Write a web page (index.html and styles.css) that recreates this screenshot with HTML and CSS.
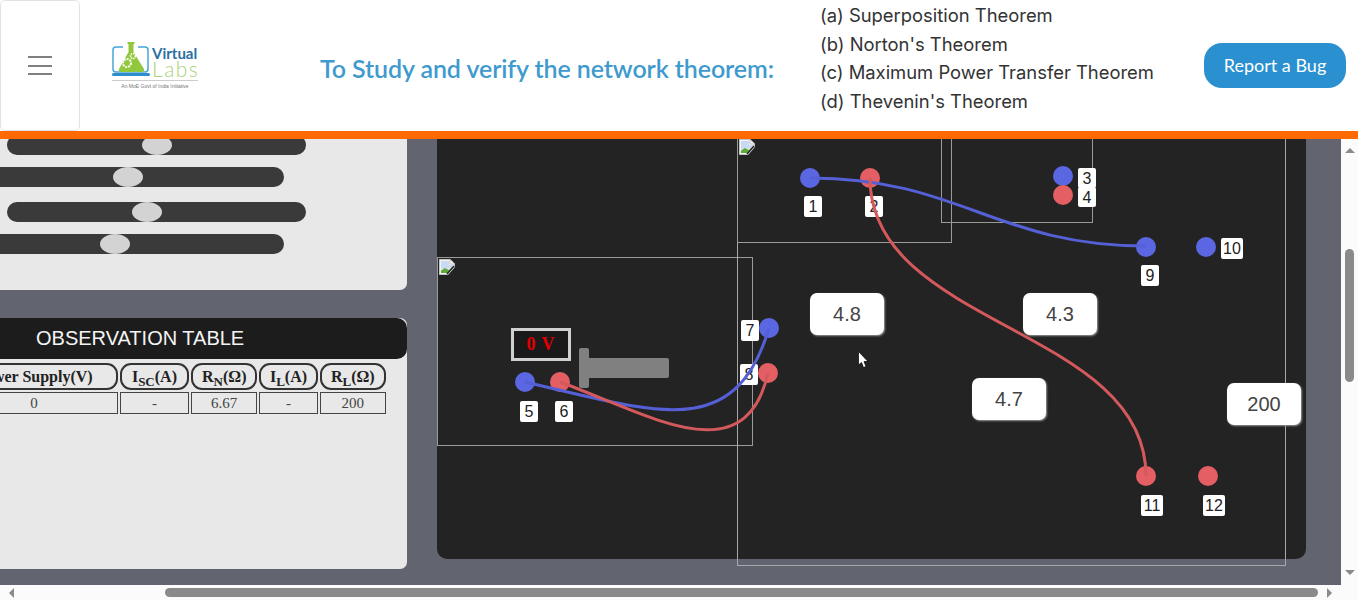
FILE: index.html
```html
<!DOCTYPE html>
<html lang="en">
<head>
    <meta charset="UTF-8">
    <title>Virtual Labs - Network Theorem</title>
    <link rel="stylesheet" href="styles.css">
</head>
<body>
<svg class="defs" width="0" height="0">
    <symbol id="broken" viewBox="0 0 16 16">
        <path d="M.5 .5H11L15.500 5V15.500H.5Z" fill="#f2f2f2" stroke="#c4c4c4"/>
        <path d="M2 2H10V6H14V9L2 10Z" fill="#c9daf5"/>
        <path d="M2 14V11.500L6 9L10 11L13 8L9 14Z" fill="#5fa83e"/>
        <path d="M11 .5V5H15.500Z" fill="#fff" stroke="#c4c4c4"/>
        <path d="M16 8L9 16H16Z" fill="#232323"/>
        <path d="M15 7L8 15" stroke="#232323" stroke-width="1.500"/>
    </symbol>
</svg>

<header class="top">
    <button class="menu-btn" type="button" aria-label="menu">
        <span></span><span></span><span></span>
    </button>

    <div class="logo">
        <div class="logo-main">
            <svg class="logo-icon" width="40" height="36" viewBox="0 0 40 36">
                <path d="M11 5H4Q1 5 1 8V27Q1 30 4 30H33Q36 30 36 27V8Q36 5 33 5H26" fill="none" stroke="#45a5da" stroke-width="1.500"/>
                <rect x="0" y="31" width="38" height="3" rx="1.500" fill="#2c8fcb"/>
                <path d="M15.500 0H22.500V2H21.500V10L32 27Q33 30 30 30H9Q6 30 7 27L16.500 10V2H15.500Z" fill="#92c83e"/>
                <circle cx="15" cy="21" r="4" fill="none" stroke="#fff" stroke-width="2" stroke-dasharray="2 1"/>
                <circle cx="21" cy="14" r="2.500" fill="none" stroke="#fff" stroke-width="1.500" stroke-dasharray="1.500 .8"/>
            </svg>
            <div class="logo-words">
                <span class="logo-virtual">Virtual</span>
                <span class="logo-labs">Labs</span>
            </div>
        </div>
        <div class="logo-tag">An MoE Govt of India Initiative</div>
    </div>

    <h1 class="title">To Study and verify the network theorem:</h1>

    <ul class="theorems">
        <li>(a) Superposition Theorem</li>
        <li>(b) Norton's Theorem</li>
        <li>(c) Maximum Power Transfer Theorem</li>
        <li>(d) Thevenin's Theorem</li>
    </ul>

    <button class="bug-btn" type="button">Report a Bug</button>
</header>

<div class="middle">
    <main class="viewport">
        <section class="left">
            <div class="panel sliders">
                <div class="track long first"><i class="knob k1"></i></div>
                <div class="track short"><i class="knob k2"></i></div>
                <div class="track long third"><i class="knob k3"></i></div>
                <div class="track short"><i class="knob k4"></i></div>
            </div>

            <div class="panel observation">
                <div class="obs-title">OBSERVATION TABLE</div>
                <table class="obs-table">
                    <colgroup>
                        <col class="c-supply">
                        <col class="c-isc">
                        <col class="c-rn">
                        <col class="c-il">
                        <col class="c-rl">
                    </colgroup>
                    <tr>
                        <th>Power Supply(V)</th>
                        <th>I<sub>SC</sub>(A)</th>
                        <th>R<sub>N</sub>(&Omega;)</th>
                        <th>I<sub>L</sub>(A)</th>
                        <th>R<sub>L</sub>(&Omega;)</th>
                    </tr>
                    <tr>
                        <td>0</td>
                        <td>-</td>
                        <td>6.67</td>
                        <td>-</td>
                        <td>200</td>
                    </tr>
                </table>
            </div>
        </section>

        <section class="canvas">
            <div class="frame f-source"></div>
            <div class="frame f-big"></div>
            <div class="frame f-top"></div>
            <div class="frame f-right"></div>
            <svg class="broken b-top"><use href="#broken"/></svg>
            <svg class="broken b-source"><use href="#broken"/></svg>

            <div class="voltmeter">0 V</div>
            <div class="knob-stem"></div>
            <div class="knob-bar"></div>

            <b class="tag n1">1</b>
            <b class="tag n2">2</b>
            <b class="tag n3">3</b>
            <b class="tag n4">4</b>
            <b class="tag n5">5</b>
            <b class="tag n6">6</b>
            <b class="tag n7">7</b>
            <b class="tag n8">8</b>
            <b class="tag n9">9</b>
            <b class="tag wide n10">10</b>
            <b class="tag wide n11">11</b>
            <b class="tag wide n12">12</b>

            <i class="dot blue p1"></i>
            <i class="dot red p2"></i>
            <i class="dot blue p3"></i>
            <i class="dot red p4"></i>
            <i class="dot blue p5"></i>
            <i class="dot red p6"></i>
            <i class="dot blue p7"></i>
            <i class="dot red p8"></i>
            <i class="dot blue p9"></i>
            <i class="dot blue p10"></i>
            <i class="dot red p11"></i>
            <i class="dot red p12"></i>

            <svg class="wires" viewBox="437 139 869 420">
                <path class="wire-blue" d="M525 382C655 412 735 443 769 328"/>
                <path class="wire-red" d="M560 382C650 415 745 475 768 373"/>
                <path class="wire-blue" d="M810 178C960 178 996 246 1146 246"/>
                <path class="wire-red" d="M870 178C870 327 1146 327 1146 476"/>
            </svg>

            <div class="value v-48">4.8</div>
            <div class="value v-43">4.3</div>
            <div class="value v-47">4.7</div>
            <div class="value v-200">200</div>

            <svg class="cursor" width="12" height="18" viewBox="0 0 12 18">
                <path d="M.5 .5V14L3.500 11.500L5.500 16.500L8 15.500L6 10.500H10Z" fill="#fff" stroke="#000" stroke-width=".7"/>
            </svg>
        </section>
    </main>

    <aside class="vscroll">
        <span class="arrow-up"></span>
        <span class="vthumb"></span>
        <span class="arrow-down"></span>
    </aside>
</div>

<footer class="hscroll">
    <span class="arrow-left"></span>
    <span class="hthumb"></span>
    <span class="arrow-right"></span>
</footer>
</body>
</html>
```

FILE: styles.css
```css
html, body {
    margin: 0;
    height: 100%;
    overflow: hidden;
}
body {
    display: flex;
    flex-direction: column;
    background: #fff;
    font-family: "Liberation Sans", Arial, sans-serif;
}
.defs {
    position: absolute;
}

/* header */
.top {
    flex: none;
    display: flex;
    box-sizing: border-box;
    height: 139px;
    border-bottom: 8px solid #ff6a00;
    background: #fff;
}
.menu-btn {
    box-sizing: border-box;
    flex: none;
    display: flex;
    flex-direction: column;
    justify-content: center;
    align-items: center;
    gap: 6.500px;
    width: 80px;
    height: 131px;
    padding: 0;
    background: #fff;
    border: 1px solid #e2e2e2;
    border-radius: 5px;
}
.menu-btn span {
    display: block;
    width: 24px;
    height: 2px;
    background: #808080;
}
.logo {
    flex: none;
    width: 86px;
    margin: 42px 0 0 32px;
}
.logo-main {
    display: flex;
    height: 37px;
}
.logo-icon {
    flex: none;
}
.logo-words {
    display: flex;
    flex-direction: column;
}
.logo-virtual {
    font: 700 15px/14px "Lato", sans-serif;
    color: #2a6f9f;
    margin-top: 4px;
}
.logo-labs {
    font: 300 21px/18px "Lato", sans-serif;
    letter-spacing: 1.500px;
    color: #a9d37a;
}
.logo-tag {
    margin-top: 1px;
    padding-top: 2px;
    border-top: 1px solid #ccc;
    font: 5px/7px "Liberation Sans", sans-serif;
    color: #777;
    text-align: center;
    white-space: nowrap;
}
.title {
    flex: none;
    width: 500px;
    margin: 51px 0 0 122px;
    font: 600 25px/34px "Lato", sans-serif;
    letter-spacing: -.1px;
    color: #3f9ace;
    white-space: nowrap;
}
.theorems {
    flex: none;
    width: 384px;
    margin: 0;
    padding: 1px 0 0;
    list-style: none;
    font: 18.400px/28.660px "Inter", sans-serif;
    color: #333;
    white-space: nowrap;
}
.bug-btn {
    flex: none;
    width: 142px;
    height: 45px;
    margin-top: 43px;
    padding: 0 0 2px;
    border: 0;
    border-radius: 18px;
    background: #2a90cf;
    color: #fff;
    font: 18px "Lato", sans-serif;
}

/* middle area */
.middle {
    flex: 1;
    display: flex;
    min-height: 0;
}
.viewport {
    flex: 1;
    display: flex;
    overflow: hidden;
    background: #62656f;
}
.left {
    flex: none;
    display: flex;
    flex-direction: column;
    gap: 28px;
    width: 407px;
}
.panel {
    background: #e8e8e8;
    overflow: hidden;
}
.sliders {
    height: 151px;
    border-bottom-right-radius: 7px;
}
.track {
    position: relative;
    height: 20px;
    border-radius: 10px;
    background: #3a3a3a;
}
.track.long {
    width: 299px;
    margin-left: 7px;
}
.track.short {
    width: 304px;
    margin-left: -20px;
    margin-top: 12px;
}
.track.first {
    margin-top: -4px;
}
.track.third {
    margin-top: 15px;
}
.knob {
    position: absolute;
    top: 0;
    width: 30px;
    height: 20px;
    border-radius: 50%;
    background: #d3d3d3;
}
.k1 { left: 135px; }
.k2 { left: 133px; }
.k3 { left: 125px; }
.k4 { left: 120px; }

.observation {
    height: 251px;
    border-radius: 0 7px 7px 0;
}
.obs-title {
    height: 41px;
    padding-left: 36px;
    border-radius: 0 10px 10px 0;
    background: #1c1c1c;
    color: #f4f4f4;
    font-size: 20px;
    line-height: 41px;
}
.obs-table {
    table-layout: fixed;
    width: 440px;
    margin: 2px 0 0 -52px;
    border-collapse: separate;
    border-spacing: 2.300px;
    font-family: "Liberation Serif", serif;
    font-size: 16px;
    color: #222;
}
.c-supply { width: 167px; }
.c-isc { width: 69px; }
.c-rn { width: 66px; }
.c-il { width: 58px; }
.c-rl { width: 66px; }
.obs-table th {
    box-sizing: border-box;
    height: 27px;
    padding: 0;
    border: 2px solid #333;
    border-radius: 11px;
    white-space: nowrap;
}
.obs-table sub {
    font-size: 13px;
    line-height: 0;
}
.obs-table td {
    box-sizing: border-box;
    height: 22px;
    padding: 0;
    border: 1px solid #444;
    text-align: center;
    font-size: 15px;
    color: #444;
}

/* circuit board, children are placed on it freely */
.canvas {
    position: relative;
    flex: none;
    width: 869px;
    height: 420px;
    margin-left: 30px;
    background: #232323;
    border-radius: 0 0 10px 10px;
}
.frame {
    position: absolute;
    box-sizing: border-box;
    border: 1px solid #9a9a9a;
}
.f-source { left: 0; top: 118px; width: 316px; height: 189px; }
.f-big { left: 300px; top: -20px; width: 549px; height: 447px; border-color: #a8a8a8; }
.f-top { left: 300px; top: -20px; width: 215px; height: 124px; }
.f-right { left: 504px; top: -20px; width: 152px; height: 104px; }
.broken {
    position: absolute;
    width: 16px;
    height: 16px;
}
.b-top { left: 302px; top: 0; }
.b-source { left: 2px; top: 120px; }

.voltmeter {
    position: absolute;
    left: 74px;
    top: 189px;
    box-sizing: border-box;
    width: 60px;
    height: 33px;
    border: 3px solid #d0d0d0;
    background: #1a1a1a;
    color: #e00000;
    font: 700 18px/26px "Liberation Serif", serif;
    letter-spacing: 1px;
    text-align: center;
}
.knob-stem {
    position: absolute;
    left: 142px;
    top: 209px;
    width: 10px;
    height: 40px;
    border-radius: 2px;
    background: #808080;
}
.knob-bar {
    position: absolute;
    left: 152px;
    top: 219px;
    width: 80px;
    height: 20px;
    border-radius: 0 2px 2px 0;
    background: #808080;
}

.tag {
    position: absolute;
    width: 18px;
    height: 21px;
    border-radius: 2px;
    background: #fff;
    color: #222;
    font-weight: 400;
    font-size: 16px;
    line-height: 21px;
    text-align: center;
}
.tag.wide { width: 22px; }
.n1 { left: 367px; top: 57px; }
.n2 { left: 428px; top: 57px; }
.n3 { left: 641px; top: 29px; height: 20px; }
.n4 { left: 641px; top: 48px; height: 20px; }
.n5 { left: 83px; top: 262px; }
.n6 { left: 118px; top: 262px; }
.n7 { left: 304px; top: 181px; }
.n8 { left: 303px; top: 225px; }
.n9 { left: 704px; top: 126px; }
.n10 { left: 784px; top: 99px; }
.n11 { left: 704px; top: 356px; }
.n12 { left: 766px; top: 356px; }

.dot {
    position: absolute;
    width: 20px;
    height: 20px;
    border-radius: 50%;
}
.blue { background: #5b66e2; }
.red { background: #e35f63; }
.p1 { left: 363px; top: 29px; }
.p2 { left: 423px; top: 29px; }
.p3 { left: 616px; top: 27px; }
.p4 { left: 616px; top: 46px; }
.p5 { left: 78px; top: 233px; }
.p6 { left: 113px; top: 233px; }
.p7 { left: 322px; top: 179px; }
.p8 { left: 321px; top: 224px; }
.p9 { left: 699px; top: 98px; }
.p10 { left: 759px; top: 98px; }
.p11 { left: 699px; top: 327px; }
.p12 { left: 761px; top: 327px; }

.wires {
    position: absolute;
    left: 0;
    top: 0;
    width: 869px;
    height: 420px;
    overflow: visible;
    pointer-events: none;
}
.wires path {
    fill: none;
    stroke-width: 3px;
}
.wire-blue { stroke: #5560d6; }
.wire-red { stroke: #d4595d; }

.value {
    position: absolute;
    width: 74px;
    height: 42px;
    border-radius: 7px;
    background: #fff;
    box-shadow: 1px 1px 2px #9a9a9a;
    color: #444;
    font-size: 20px;
    line-height: 42px;
    text-align: center;
}
.v-48 { left: 373px; top: 154px; }
.v-43 { left: 586px; top: 154px; }
.v-47 { left: 535px; top: 239px; }
.v-200 { left: 790px; top: 244px; }
.cursor {
    position: absolute;
    left: 421px;
    top: 212px;
}

/* scrollbars */
.vscroll {
    flex: none;
    display: flex;
    flex-direction: column;
    align-items: center;
    width: 17px;
    background: #fbfbfb;
}
.arrow-up, .arrow-down {
    width: 0;
    height: 0;
    border-left: 5px solid transparent;
    border-right: 5px solid transparent;
}
.arrow-up {
    margin-top: 9px;
    border-bottom: 5px solid #8a8a8a;
}
.arrow-down {
    margin-top: 188px;
    border-top: 5px solid #8a8a8a;
}
.vthumb {
    width: 9px;
    height: 133px;
    margin-top: 96px;
    border-radius: 5px;
    background: #8a8a8a;
}
.hscroll {
    flex: none;
    display: flex;
    align-items: center;
    height: 15px;
    background: #fbfbfb;
}
.arrow-left, .arrow-right {
    width: 0;
    height: 0;
    border-top: 5px solid transparent;
    border-bottom: 5px solid transparent;
}
.arrow-left {
    margin-left: 9px;
    border-right: 5px solid #8a8a8a;
}
.arrow-right {
    margin-left: 9px;
    border-left: 5px solid #8a8a8a;
}
.hthumb {
    width: 1153px;
    height: 9px;
    margin-left: 151px;
    border-radius: 5px;
    background: #8a8a8a;
}
```
